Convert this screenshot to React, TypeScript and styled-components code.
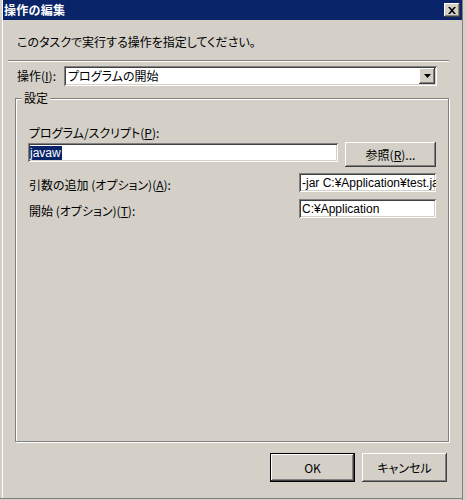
import React from "react";
import styled, { createGlobalStyle } from "styled-components";

const Global = createGlobalStyle`
  html, body { margin: 0; padding: 0; background: #d4d0c8; }
  body {
    font-family: "Noto Sans CJK JP", "Liberation Sans", sans-serif;
    font-size: 12px;
    font-feature-settings: "palt";
    color: #000;
  }
`;

const sunken = `
  box-shadow: inset 1px 1px #808080, inset -1px -1px #ffffff,
    inset 2px 2px #404040, inset -2px -2px #d4d0c8;
`;

const raised = `
  box-shadow: inset -1px -1px #404040, inset 1px 1px #ffffff,
    inset -2px -2px #808080, inset 2px 2px #d4d0c8;
`;

const Window = styled.div`
  box-sizing: border-box;
  width: 466px;
  height: 500px;
  display: flex;
  flex-direction: column;
  padding: 0 4px 3px 3px;
  background: #d4d0c8;
  box-shadow: inset -3px 0 #d4d0c8, inset -4px 0 #808080,
    inset 0 -1px #d4d0c8, inset 0 -2px #808080,
    inset 2px 0 #d4d0c8, inset 3px 0 #ffffff;
`;

const TitleBar = styled.div`
  height: 20px;
  flex: 0 0 20px;
  background: #0a246a;
  display: flex;
  align-items: center;
  justify-content: space-between;
  padding: 0 2px 0 1px;
`;

const Title = styled.span`
  color: #fff;
  font-weight: bold;
  font-size: 12px;
  line-height: 14px;
  letter-spacing: 0.3px;
`;

const CloseButton = styled.div`
  width: 16px;
  height: 14px;
  background: #d4d0c8;
  ${raised}
  display: flex;
  align-items: center;
  justify-content: center;
`;

const Body = styled.div`
  flex: 1;
  display: flex;
  flex-direction: column;
  padding: 0 13px 0 5px;
`;

const Description = styled.div`
  margin: 15px 0 0 9px;
  line-height: 14px;
`;

const Separator = styled.div`
  margin-top: 11px;
  height: 0;
  border-top: 1px solid #808080;
  border-bottom: 1px solid #ffffff;
`;

const OpRow = styled.div`
  display: flex;
  align-items: center;
  margin: 4px 12px 0 9px;
`;

const OpLabel = styled.span`
  flex: 0 0 47px;
  line-height: 14px;
`;

const Combo = styled.div`
  flex: 1;
  height: 20px;
  box-sizing: border-box;
  background: #fff;
  ${sunken}
  display: flex;
  align-items: center;
  justify-content: space-between;
  padding: 2px 2px 2px 4px;
`;

const ComboText = styled.span`
  line-height: 14px;
`;

const DropButton = styled.div`
  width: 16px;
  height: 16px;
  background: #d4d0c8;
  ${raised}
  display: flex;
  align-items: center;
  justify-content: center;
`;

const Group = styled.div`
  position: relative;
  flex: 1;
  margin: 12px 0 0 7px;
  border: 1px solid #808080;
  box-shadow: inset 1px 1px #ffffff, 1px 1px #ffffff;
  padding: 27px 12px 0 12px;
  display: flex;
  flex-direction: column;
`;

const Legend = styled.span`
  position: absolute;
  top: -8px;
  left: 6px;
  padding: 0 2px;
  background: #d4d0c8;
  line-height: 14px;
`;

const FieldLabel = styled.div`
  line-height: 14px;
  margin-left: 1px;
`;

const ProgramRow = styled.div`
  display: flex;
  align-items: flex-start;
  gap: 7px;
  margin-top: 2px;
`;

const Field = styled.div<{ $w?: number }>`
  box-sizing: border-box;
  ${(p) => (p.$w ? `width: ${p.$w}px;` : "flex: 1;")}
  height: 19px;
  background: #fff;
  ${sunken}
  padding: 2px 2px 2px 2px;
  display: flex;
  align-items: center;
  overflow: hidden;
  white-space: nowrap;
  font-family: "Liberation Sans", "Noto Sans CJK JP", sans-serif;
  font-size: 12px;
  font-feature-settings: normal;
`;

const ProgramField = styled(Field)`
  margin-top: 1px;
`;

const Selected = styled.span`
  background: #0a246a;
  color: #fff;
  line-height: 14px;
  padding: 0 1px 0 0;
`;

const FieldText = styled.span`
  line-height: 14px;
  padding-left: 1px;
`;

const Button = styled.div<{ $w: number; $h: number; $default?: boolean }>`
  box-sizing: border-box;
  width: ${(p) => p.$w}px;
  height: ${(p) => p.$h}px;
  background: #d4d0c8;
  ${raised}
  ${(p) => (p.$default ? "border: 1px solid #000;" : "")}
  display: flex;
  align-items: center;
  justify-content: center;
  line-height: 14px;
`;

const OptionRow = styled.div<{ $mt: number }>`
  display: flex;
  align-items: center;
  justify-content: space-between;
  margin-top: ${(p) => p.$mt}px;
`;

const OptionLabel = styled.span`
  line-height: 14px;
  margin: 4px 0 0 1px;
`;

const ButtonRow = styled.div`
  display: flex;
  justify-content: flex-end;
  gap: 7px;
  margin: 11px 2px 15px 0;
`;

export default function App() {
  return (
    <>
      <Global />
      <Window>
        <TitleBar>
          <Title>操作の編集</Title>
          <CloseButton>
            <svg width="8" height="7" viewBox="0 0 8 7">
              <path d="M0 0h2l2 2.2L6 0h2L5 3.5 8 7H6L4 4.8 2 7H0l3-3.5z" fill="#000" />
            </svg>
          </CloseButton>
        </TitleBar>
        <Body>
          <Description>このタスクで実行する操作を指定してください。</Description>
          <Separator />
          <OpRow>
            <OpLabel>
              操作(<u>I</u>):
            </OpLabel>
            <Combo>
              <ComboText>プログラムの開始</ComboText>
              <DropButton>
                <svg width="7" height="4" viewBox="0 0 7 4">
                  <path d="M0 0h7L3.5 4z" fill="#000" />
                </svg>
              </DropButton>
            </Combo>
          </OpRow>
          <Group>
            <Legend>設定</Legend>
            <FieldLabel>
              プログラム/スクリプト(<u>P</u>):
            </FieldLabel>
            <ProgramRow>
              <ProgramField>
                <Selected>javaw</Selected>
              </ProgramField>
              <Button $w={91} $h={25}>
                参照(<u>R</u>)...
              </Button>
            </ProgramRow>
            <OptionRow $mt={6}>
              <OptionLabel>
                引数の追加 (オプション)(<u>A</u>):
              </OptionLabel>
              <Field $w={137}>
                <FieldText>-jar C:¥Application¥test.jar</FieldText>
              </Field>
            </OptionRow>
            <OptionRow $mt={7}>
              <OptionLabel>
                開始 (オプション)(<u>T</u>):
              </OptionLabel>
              <Field $w={137}>
                <FieldText>C:¥Application</FieldText>
              </Field>
            </OptionRow>
          </Group>
          <ButtonRow>
            <Button $w={85} $h={29} $default>
              OK
            </Button>
            <Button $w={85} $h={29}>
              キャンセル
            </Button>
          </ButtonRow>
        </Body>
      </Window>
    </>
  );
}
